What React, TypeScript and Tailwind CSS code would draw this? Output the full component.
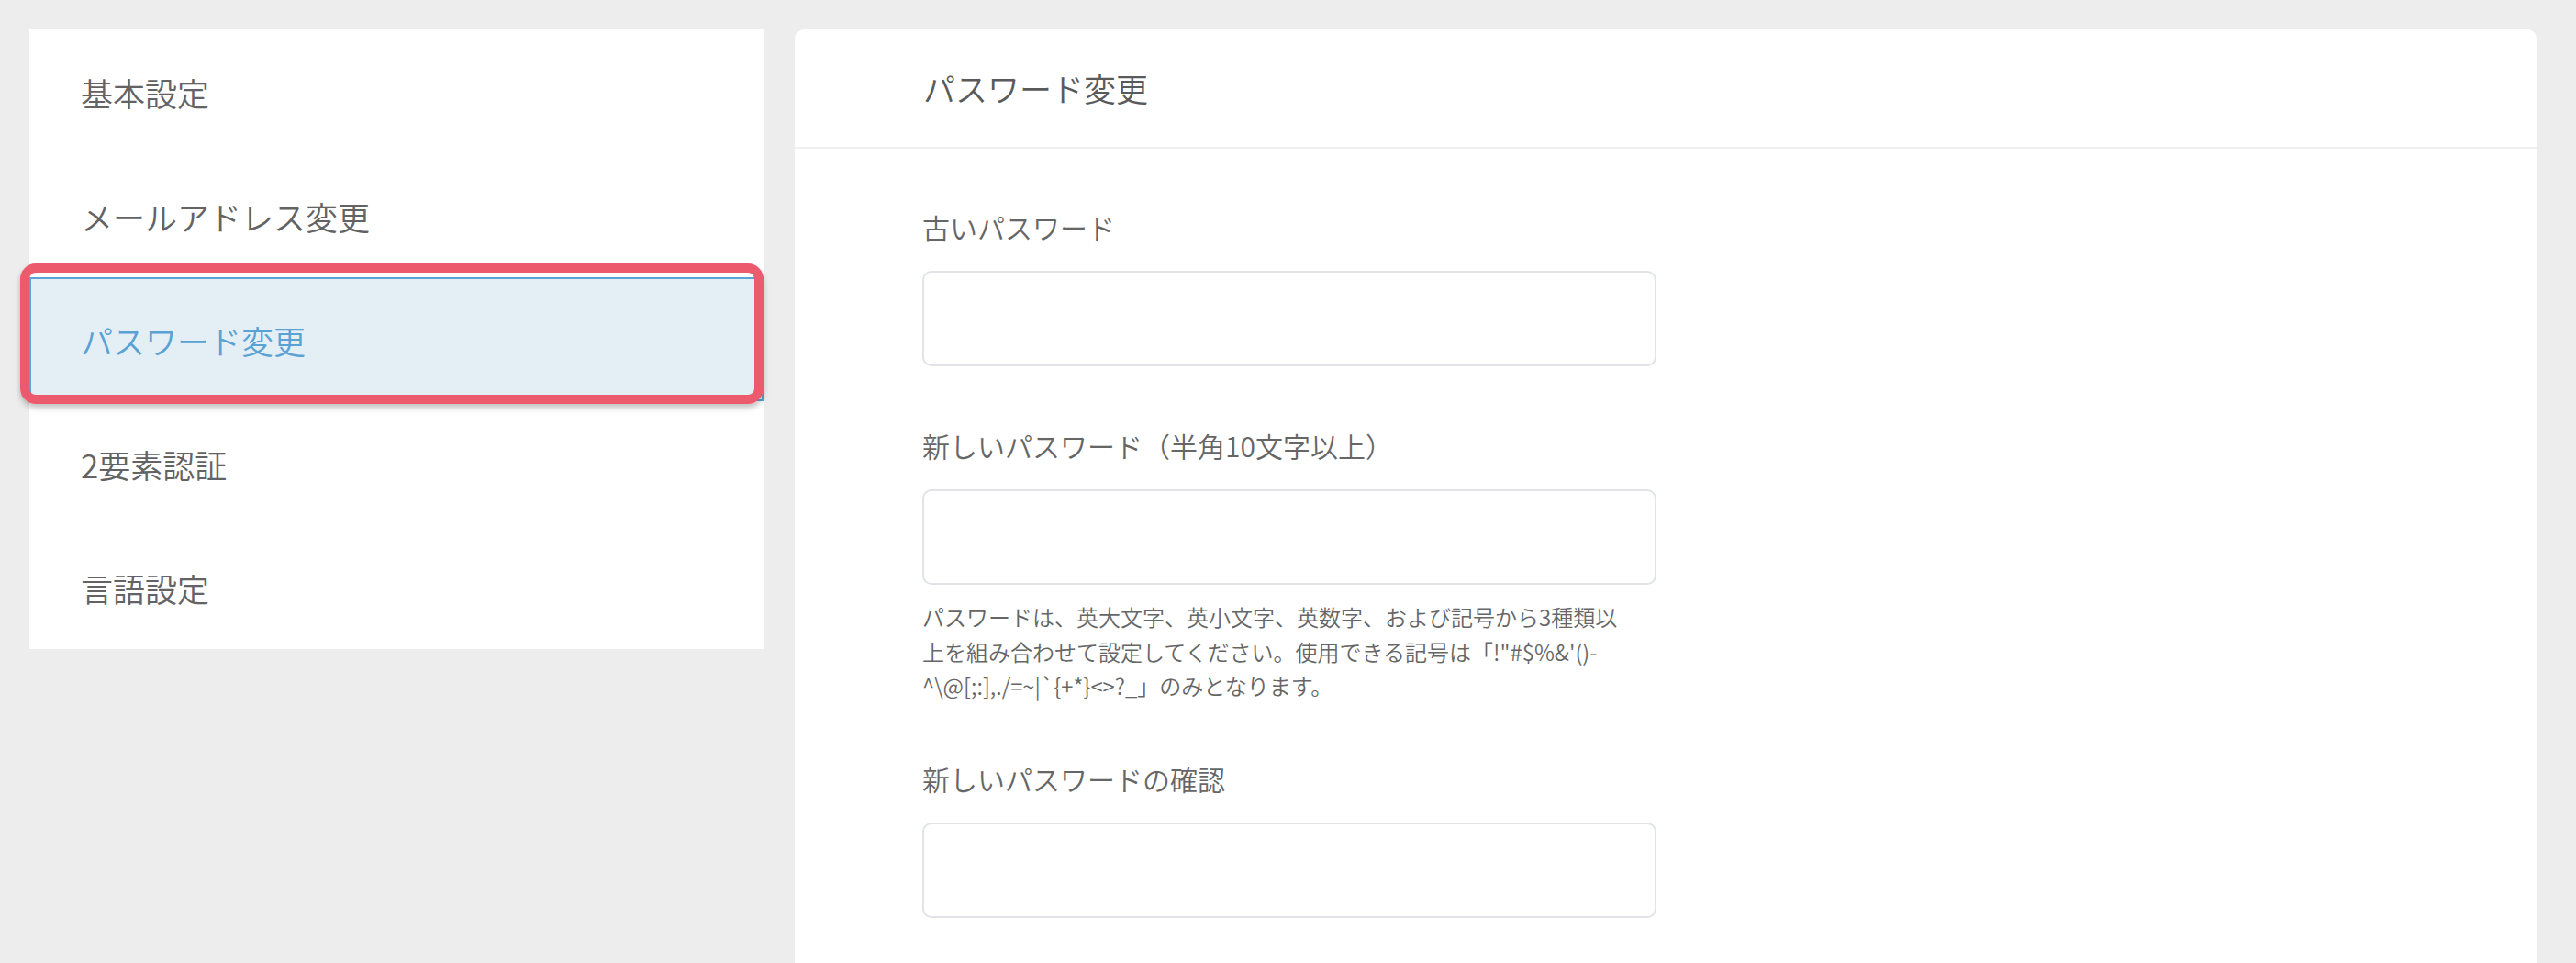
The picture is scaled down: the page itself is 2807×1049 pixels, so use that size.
import React from 'react'

const menu = ['基本設定', 'メールアドレス変更', 'パスワード変更', '2要素認証', '言語設定']

const font = "font-['Noto_Sans_CJK_JP','Noto_Sans',sans-serif] font-[350]"

function Field({ label, className = '' }: { label: string; className?: string }) {
    return (
        <div className={className}>
            <label className="block text-[30px] leading-[45px] text-[#666] mb-[25px]">{label}</label>
            <input
                type="password"
                className="block w-[800px] h-[104px] rounded-[10px] border-2 border-[#e1e3e8] bg-white px-4 outline-none"
            />
        </div>
    )
}

export default function App() {
    return (
        <div className={`${font} w-full h-[1049px] overflow-hidden bg-[#ededed] flex gap-[34px] pt-[32px] pl-[32px] pr-[43px]`}>
            {/* Side menu */}
            <nav className="w-[800px] shrink-0 self-start bg-white">
                {menu.map((item) =>
                    item === 'パスワード変更' ? (
                        <div key={item} className="relative h-[135px]">
                            <div className="h-full flex items-center pl-[54px] pt-[4px] bg-[#e4eff5] border-2 border-[#5ba4d6] text-[35px] text-[#5aa1d4]">
                                {item}
                            </div>
                            {/* highlight frame */}
                            <div className="absolute -left-[10px] -top-[15px] right-0 -bottom-[3px] rounded-[17px] border-[10px] border-[#ec5a6e] shadow-[0_4px_6px_rgba(0,0,0,0.25)]"></div>
                        </div>
                    ) : (
                        <div key={item} className="h-[135px] flex items-center pl-[56px] pt-[4px] text-[35px] text-[#636363]">
                            {item}
                        </div>
                    )
                )}
            </nav>

            {/* Main card */}
            <main className="flex-1 bg-white rounded-t-[10px]">
                <div className="h-[130px] flex items-center pl-[140px] border-b-2 border-[#f0f0f0]">
                    <h1 className="text-[35px] text-[#5a5a5a]">パスワード変更</h1>
                </div>
                <div className="pl-[139px] pt-[63px]">
                    <Field label="古いパスワード" className="mb-[64px]" />
                    <div className="mb-[60px]">
                        <Field label="新しいパスワード（半角10文字以上）" />
                        <p className="mt-[16px] w-[800px] text-[24px] leading-[37.5px] text-[#666]">
                            パスワードは、英大文字、英小文字、英数字、および記号から3種類以
                            <br />
                            上を組み合わせて設定してください。使用できる記号は「!"#$%&amp;'()-
                            <br />
                            ^\@[;:],./=~|`{'{'}+*{'}'}&lt;&gt;?_」のみとなります。
                        </p>
                    </div>
                    <Field label="新しいパスワードの確認" />
                </div>
            </main>
        </div>
    )
}
